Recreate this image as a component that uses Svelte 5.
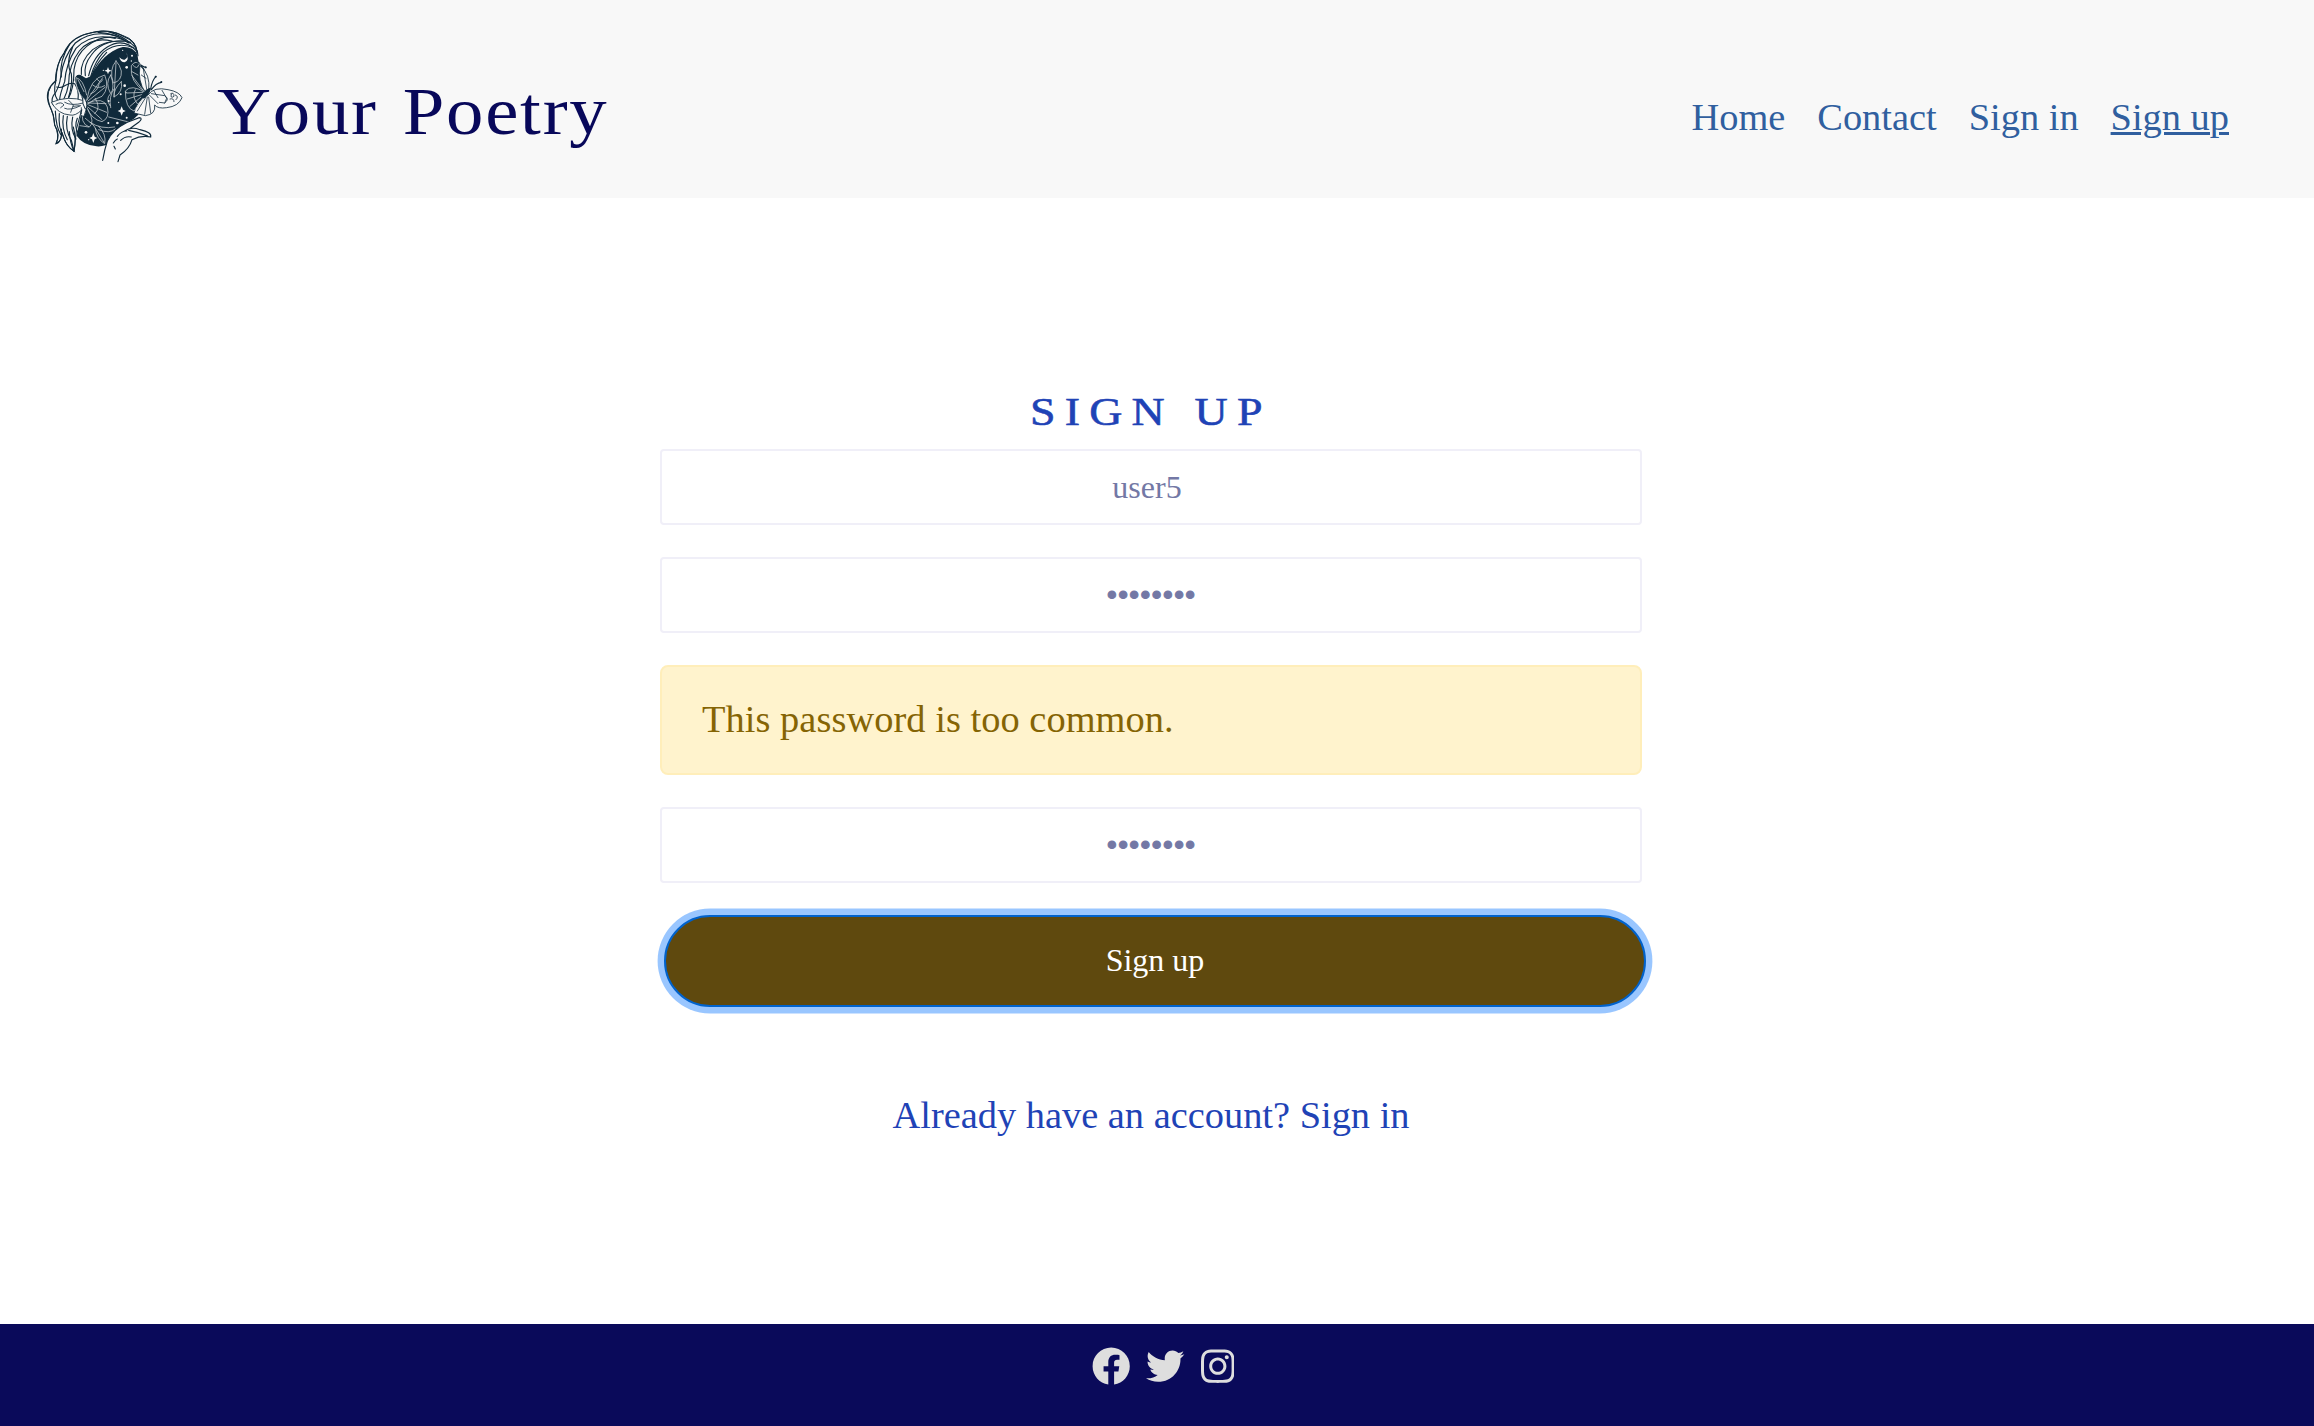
<script>
  const links = [
    { label: 'Home', active: false },
    { label: 'Contact', active: false },
    { label: 'Sign in', active: false },
    { label: 'Sign up', active: true }
  ];
  const mask = '•'.repeat(8);
</script>

<div class="page">
  <header>
    <svg class="logo" viewBox="0 0 510 480" aria-label="Your Poetry logo">
      <!-- hair silhouette -->
      <path class="light" d="M322 112 Q316 74 284 64 Q238 40 190 52 Q126 62 104 112 Q76 150 76 200 Q44 226 58 270 Q74 300 74 330 Q90 362 78 386 Q94 382 96 352 Q104 388 132 410 L140 340 L180 190 L246 112 Z" />
      <!-- night-sky face -->
      <path class="dark" d="M182 184 Q220 112 278 96 Q308 94 322 118 L326 142 Q346 154 352 196 Q358 232 342 262 Q330 308 296 320 Q262 342 244 382 Q224 396 200 394 Q158 390 140 362 L160 260 L134 196 Q136 176 152 180 L168 190 Z" />
      <!-- hair strands -->
      <g class="line">
        <path d="M322 114 Q318 78 284 66 Q238 38 180 54 Q122 66 102 114 Q80 140 78 196 Q40 228 58 270" />
        <path d="M268 66 Q190 40 136 84 Q100 124 92 186 Q88 220 70 242 Q62 256 70 270" />
        <path d="M256 70 Q184 52 138 100 Q108 146 104 200 Q90 236 88 260" />
        <path d="M246 78 Q184 64 148 108 Q116 150 116 206 Q112 232 100 256" />
        <path d="M300 84 Q232 44 170 94 Q138 120 132 164 Q132 222 114 252" />
        <path d="M302 82 Q236 68 188 104 Q150 138 154 178" />
        <path d="M280 78 Q214 76 184 120 Q160 150 166 182" />
        <path d="M310 98 Q262 78 220 112 Q196 138 182 184" />
        <path d="M320 108 Q280 66 232 96 Q190 122 176 182" />
        <path d="M246 118 Q230 154 186 182 Q194 150 230 112" />
        <path d="M234 50 Q272 60 304 86 Q324 102 324 122" />
        <path d="M204 52 Q258 54 296 84" />
        <path d="M120 86 Q86 138 94 186" />
        <path d="M128 96 Q106 144 124 176 Q128 208 116 246" />
        <path d="M78 196 Q68 232 82 254" />
        <path d="M80 216 Q92 220 104 212 Q122 202 134 206 Q148 226 144 254" />
        <path d="M58 270 Q72 298 74 330 Q92 360 78 386 Q98 380 94 342" />
        <path d="M76 288 Q78 336 92 358" />
        <path d="M88 296 Q84 338 100 364 Q108 394 132 408 Q120 384 118 350" />
        <path d="M100 302 Q94 342 112 374" />
        <path d="M112 304 Q104 344 124 376 L132 408 Q140 374 130 336" />
        <path d="M128 306 Q120 344 138 372" />
        <path d="M142 310 Q132 334 144 354" />
      </g>
      <!-- left butterfly -->
      <g class="outline">
        <path d="M170 256 Q180 190 224 180 Q240 218 216 244 Q190 252 172 268" />
        <path d="M172 264 Q222 244 232 276 Q240 310 216 320 Q184 314 170 276" />
        <path d="M160 250 Q134 226 138 188 Q160 192 170 240" />
        <path d="M170 256 L218 188 M174 258 L226 216 M176 264 L228 266 M176 270 L230 292 M174 276 L216 314 M182 236 Q204 230 208 204 M188 210 Q204 224 224 212 M196 250 Q214 280 194 296 M200 192 l12 10 l6 -8" />
        <path d="M160 282 Q148 326 178 336 Q196 322 174 284 M180 322 Q214 344 254 336 M196 340 Q200 372 224 386 Q230 358 206 334 M190 330 L222 382 M166 310 L190 330 M206 344 Q238 358 256 342 M144 194 L162 230 M150 332 l26 4" />
      </g>
      <path class="light thin" d="M164 258 Q116 240 64 262 Q84 298 120 300 Q136 304 156 284 Q146 304 162 304 Q172 286 166 262 Z" />
      <path class="line fine" d="M78 268 Q94 258 102 270 L92 278 M104 262 Q124 274 160 264 M116 256 L130 270 L122 292 M130 274 L148 272 M104 280 Q120 288 152 272 M154 278 L154 296" />
      <path class="light" d="M158 248 Q164 246 170 264 Q172 280 166 282 Q156 268 158 248 Z" />
      <!-- leaves across the face -->
      <g class="outline">
        <path d="M258 138 Q236 164 250 204 Q276 198 274 168 Q270 150 258 138 Z M258 144 L252 246" />
        <path d="M242 180 Q224 204 242 236 Q256 218 242 180 M274 200 Q280 232 252 246 Q250 222 274 200" />
        <path d="M252 222 Q236 244 242 278 M240 238 Q226 252 240 272 M236 306 L300 322" />
      </g>
      <!-- moon and stars -->
      <path class="light plain" d="M288 112 Q298 128 284 134 Q276 136 268 127 Q271 142 284 142 Q300 136 288 112 Z" />
      <g class="light plain">
        <path d="M234 156 l3 8 8 3 -8 3 -3 8 -3 -8 -8 -3 8 -3z" />
        <path d="M275 274 l4 10 8 4 -8 4 -4 10 -4 -10 -8 -4 8 -4z" />
        <path d="M190 354 l4 11 8 4 -8 4 -4 11 -4 -11 -8 -4 8 -4z" />
        <circle cx="306" cy="122" r="3" /><circle cx="290" cy="157" r="4" /><circle cx="304" cy="138" r="2" />
        <circle cx="284" cy="212" r="4" /><circle cx="272" cy="238" r="3" /><circle cx="288" cy="232" r="2" />
        <circle cx="262" cy="324" r="4" /><circle cx="235" cy="324" r="3" /><circle cx="168" cy="352" r="4" />
        <circle cx="278" cy="106" r="2" /><circle cx="220" cy="166" r="2" /><circle cx="290" cy="308" r="3" />
        <circle cx="176" cy="374" r="2" /><circle cx="236" cy="258" r="3" /><circle cx="266" cy="262" r="2" />
      </g>
      <!-- right butterfly -->
      <path class="light thin" d="M346 232 Q322 198 330 152 Q362 178 356 226 Z" />
      <path class="light thin" d="M354 240 Q372 214 414 224 Q448 230 456 248 Q446 274 410 278 Q384 282 374 270 Q378 298 346 302 L312 294 Q318 262 350 240 Z" />
      <path class="outline" d="M344 230 Q298 200 304 152 Q318 132 332 150 M344 232 Q304 206 286 228 Q286 280 312 288 Q330 268 346 238 M338 232 L290 234 M338 238 L292 252 M340 240 L300 274 M338 224 L306 182 M308 150 q14 16 18 0 M306 170 l18 10 M316 224 q-12 20 6 42" />
      <path class="line fine" d="M358 240 L384 266 M364 236 L404 242 Q420 252 404 264 L388 262 M372 228 L384 248 M396 226 L410 250 L404 264 M422 236 q10 -6 10 8 q-12 8 -8 -6 M436 240 q12 4 2 14 M420 252 q12 -4 12 8 M352 246 L344 298 M356 246 L362 294 M348 246 L322 288 M340 162 L350 222 M334 180 l14 10" />
      <path class="dark" d="M360 218 Q366 224 352 242 Q340 256 332 246 Q340 226 360 218 Z" />
      <path class="line" d="M362 222 Q366 196 378 184 M364 224 Q378 204 394 202 M336 152 L348 158 M318 138 L328 144" />
      <circle class="dark" cx="377" cy="185" r="3" /><circle class="dark" cx="394" cy="201" r="3" /><circle class="dark" cx="347" cy="157" r="3" />
      <!-- hand -->
      <path class="skin" d="M218 436 Q224 402 232 378 Q248 344 292 322 L332 306 Q340 314 326 322 L302 338 Q334 340 360 352 Q370 364 358 368 Q332 364 304 376 Q294 402 270 420 L264 440 Z" />
      <path class="line" d="M218 436 Q224 402 232 378 Q248 344 292 322 L328 308 Q340 310 326 322 L298 342 M284 348 Q302 334 330 344 Q366 352 362 366 Q334 360 306 374 Q298 402 270 420 L264 440 M296 346 Q326 352 352 362 M262 364 Q274 348 290 348 M272 376 Q286 362 304 366 M250 384 Q256 374 262 372 M252 394 l4 8" />
    </svg>
    <h1>Your Poetry</h1>
    <nav>
      {#each links as link}
        <a href="#top" class:active={link.active}>{link.label}</a>
      {/each}
    </nav>
  </header>

  <main>
    <h2>SIGN UP</h2>
    <div class="field name">user5</div>
    <div class="field password">{mask}</div>
    <div class="alert">This password is too common.</div>
    <div class="field password">{mask}</div>
    <button>Sign up</button>
    <a class="account" href="#signin">Already have an account? Sign in</a>
  </main>

  <footer>
    <svg width="38.4" height="38.4" viewBox="0 0 512 512"><path d="M504 256C504 119 393 8 256 8S8 119 8 256c0 123.78 90.69 226.38 209.25 245V327.69h-63V256h63v-54.64c0-62.15 37-96.48 93.67-96.48 27.14 0 55.52 4.84 55.52 4.84v61h-31.28c-30.8 0-40.41 19.12-40.41 38.73V256h68.78l-11 71.69h-57.78V501C413.31 482.38 504 379.78 504 256z" /></svg>
    <svg width="38.4" height="38.4" viewBox="0 0 512 512"><path d="M459.37 151.716c.325 4.548.325 9.097.325 13.645 0 138.72-105.583 298.558-298.558 298.558-59.452 0-114.68-17.219-161.137-47.106 8.447.974 16.568 1.299 25.34 1.299 49.055 0 94.213-16.568 130.274-44.832-46.132-.975-84.792-31.188-98.112-72.772 6.498.974 12.995 1.624 19.818 1.624 9.421 0 18.843-1.3 27.614-3.573-48.081-9.747-84.143-51.98-84.143-102.985v-1.299c13.969 7.797 30.214 12.67 47.431 13.319-28.264-18.843-46.781-51.005-46.781-87.391 0-19.492 5.197-37.36 14.294-52.954 51.655 63.675 129.3 105.258 216.365 109.807-1.624-7.797-2.599-15.918-2.599-24.04 0-57.828 46.782-104.934 104.934-104.934 30.213 0 57.502 12.67 76.67 33.137 23.715-4.548 46.456-13.32 66.599-25.34-7.798 24.366-24.366 44.833-46.132 57.827 21.117-2.273 41.584-8.122 60.426-16.243-14.292 20.791-32.161 39.308-52.628 54.253z" /></svg>
    <svg width="33.6" height="38.4" viewBox="0 0 448 512"><path d="M224.1 141c-63.6 0-114.9 51.3-114.9 114.9s51.3 114.9 114.9 114.9S339 319.5 339 255.9 287.7 141 224.1 141zm0 189.6c-41.1 0-74.7-33.5-74.7-74.7s33.5-74.7 74.7-74.7 74.7 33.5 74.7 74.7-33.6 74.7-74.7 74.7zm146.4-194.3c0 14.9-12 26.8-26.8 26.8-14.9 0-26.8-12-26.8-26.8s12-26.8 26.8-26.8 26.8 12 26.8 26.8zm76.1 27.2c-1.7-35.9-9.9-67.7-36.2-93.9-26.2-26.2-58-34.4-93.9-36.2-37-2.1-147.9-2.1-184.9 0-35.8 1.7-67.6 9.9-93.9 36.1s-34.4 58-36.2 93.9c-2.1 37-2.1 147.9 0 184.9 1.7 35.9 9.9 67.7 36.2 93.9s58 34.4 93.9 36.2c37 2.1 147.9 2.1 184.9 0 35.9-1.7 67.7-9.9 93.9-36.2 26.2-26.2 34.4-58 36.2-93.9 2.1-37 2.1-147.8 0-184.8zM398.8 388c-7.8 19.6-22.9 34.7-42.6 42.6-29.5 11.7-99.5 9-132.1 9s-102.7 2.6-132.1-9c-19.6-7.8-34.7-22.9-42.6-42.6-11.7-29.5-9-99.5-9-132.1s-2.6-102.7 9-132.1c7.8-19.6 22.9-34.7 42.6-42.6 29.5-11.7 99.5-9 132.1-9s102.7-2.6 132.1 9c19.6 7.8 34.7 22.9 42.6 42.6 11.7 29.5 9 99.5 9 132.1s2.7 102.7-9 132.1z" /></svg>
  </footer>
</div>

<style>
  :global(body) {
    margin: 0;
  }

  .page {
    display: flex;
    flex-direction: column;
    height: 1426px;
    background: #fff;
    font-family: 'Liberation Serif', 'Times New Roman', serif;
    font-size: 38.4px;
    overflow: hidden;
  }

  header {
    display: flex;
    align-items: flex-start;
    box-sizing: border-box;
    height: 198px;
    padding: 15px 85px 0 30px;
    background: #f8f8f8;
  }

  .logo {
    flex: none;
    width: 170px;
    height: 160px;
  }

  .dark { fill: #102a3b; }
  .light { fill: #f8f8f8; stroke: #102a3b; stroke-width: 3; }
  .light.thin { stroke-width: 2.5; }
  .light.plain { stroke: none; }
  .skin { fill: #f8f8f8; }
  .line { fill: none; stroke: #102a3b; stroke-width: 3.4; stroke-linecap: round; }
  .line.fine { stroke-width: 2.4; }
  .outline { fill: none; stroke: #c8ced2; stroke-width: 2.3; stroke-linecap: round; }

  h1 {
    margin: 56px 0 0 17px;
    color: #08085a;
    font-size: 68px;
    line-height: 80px;
    font-weight: 400;
    font-kerning: none;
    letter-spacing: 1.6px;
    word-spacing: 4px;
    white-space: nowrap;
    transform: scaleX(1.1);
    transform-origin: left;
  }

  nav {
    display: flex;
    gap: 32px;
    margin: 80px 0 0 auto;
  }

  nav a {
    color: #305f9f;
    line-height: 44px;
    text-decoration: none;
  }

  nav a.active {
    text-decoration: underline;
    text-decoration-thickness: 3px;
    text-underline-offset: 2px;
  }

  main {
    display: flex;
    flex: 1;
    flex-direction: column;
    align-items: center;
    box-sizing: border-box;
    width: 982px;
    margin-left: 660px;
    padding-top: 189px;
  }

  h2 {
    margin: 0 0 14px;
    color: #1f43b6;
    font-size: 41px;
    line-height: 48px;
    font-weight: 400;
    letter-spacing: 8.2px;
    transform: scaleX(1.12);
    -webkit-text-stroke: 0.6px #1f43b6;
  }

  .field {
    box-sizing: border-box;
    width: 982px;
    height: 76px;
    margin-bottom: 32px;
    border: 2px solid #f0eff8;
    border-radius: 4px;
    color: #7378a5;
    font-size: 32px;
    line-height: 72px;
    text-align: center;
  }

  .name {
    padding-right: 8px;
  }

  .password {
    line-height: 73px;
    -webkit-text-stroke: 1px #7378a5;
  }

  .alert {
    box-sizing: border-box;
    width: 982px;
    height: 110px;
    margin-bottom: 32px;
    padding-left: 40px;
    border: 2px solid #ffeeba;
    border-radius: 8px;
    background: #fff3cd;
    color: #856404;
    letter-spacing: 0.05px;
    line-height: 104px;
  }

  button {
    flex: none;
    width: 982px;
    height: 92px;
    margin: 0 -4px 0 4px;
    padding: 0 0 2px;
    border: 2px solid #0062cc;
    border-radius: 46px;
    background: #5f490e;
    box-shadow: 0 0 0 6.4px #99c6ff;
    color: #fff;
    font: 32px 'Liberation Serif', 'Times New Roman', serif;
  }

  .account {
    margin-top: 86px;
    color: #1f43b6;
    line-height: 44px;
    text-decoration: none;
  }

  footer {
    display: flex;
    justify-content: center;
    gap: 16px;
    box-sizing: border-box;
    height: 102px;
    padding: 23px 0 0 12px;
    background: #0a0a5a;
    fill: #dedede;
  }
</style>
